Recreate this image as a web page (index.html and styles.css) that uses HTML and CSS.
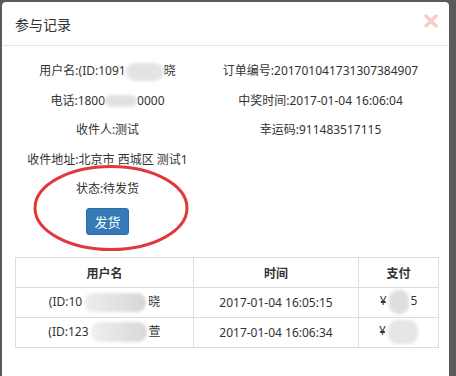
FILE: index.html
```html
<!DOCTYPE html>
<html lang="zh-CN">
  <head>
    <meta charset="UTF-8" />
    <title>参与记录</title>
    <link rel="stylesheet" href="styles.css">
  </head>
  <body>
    <div class="modal">
      <div class="modal-header">
        <h4 class="modal-title">参与记录</h4>
        <svg class="close" width="14" height="14" viewBox="0 0 14 14">
          <path d="M2 2 L12 12 M12 2 L2 12" />
        </svg>
      </div>

      <div class="modal-body">
        <div class="info">
          <div>用户名:(ID:1091<span class="blur b-name"></span>晓</div>
          <div>订单编号:201701041731307384907</div>
          <div>电话:1800<span class="blur b-phone"></span>0000</div>
          <div>中奖时间:2017-01-04 16:06:04</div>
          <div>收件人:测试</div>
          <div>幸运码:911483517115</div>
          <div>收件地址:北京市 西城区 测试1</div>
          <div></div>
          <div>状态:待发货</div>
          <div></div>
        </div>
        <div class="actions">
          <button class="btn">发货</button>
        </div>

        <table class="records">
          <thead>
            <tr>
              <th class="c-user">用户名</th>
              <th class="c-time">时间</th>
              <th>支付</th>
            </tr>
          </thead>
          <tbody>
            <tr>
              <td>(ID:10<span class="blur b-user"></span>晓</td>
              <td>2017-01-04 16:05:15</td>
              <td>¥<span class="blur b-pay"></span>5</td>
            </tr>
            <tr>
              <td>(ID:123<span class="blur b-user2"></span>萱</td>
              <td>2017-01-04 16:06:34</td>
              <td>¥<span class="blur b-pay2"></span></td>
            </tr>
          </tbody>
        </table>
      </div>

      <svg class="mark" width="164" height="92" viewBox="0 0 164 92">
        <ellipse cx="81" cy="45" rx="76" ry="41.5" />
      </svg>
    </div>
  </body>
</html>
```

FILE: styles.css
```css
body {
  margin: 0;
  background: #5b5b5b;
  font-family: "Noto Sans", "Noto Sans CJK SC", sans-serif;
  font-size: 12px;
  color: #333;
}
.modal {
  position: relative;
  margin: 2px 7px 0 2px;
  height: 374px;
  background: #fff;
  border-radius: 4px 4px 0 0;
}
.modal-header {
  height: 43px;
  padding: 0 11px 0 13px;
  display: flex;
  align-items: center;
  justify-content: space-between;
  border-bottom: 1px solid #e5e5e5;
}
.modal-title {
  margin: 0;
  font-size: 14px;
  font-weight: normal;
  color: #333;
  font-family: "Noto Sans CJK SC", sans-serif;
}
.close {
  margin-top: -6px;
}
.close path {
  stroke: #f8caca;
  stroke-width: 3.4;
  stroke-linecap: round;
}
.modal-body {
  padding: 10px 10px 0 13px;
}
.info {
  display: grid;
  grid-template-columns: 213px 213px;
  margin-left: -14px;
  line-height: 29.5px;
  text-align: center;
}
.actions {
  width: 213px;
  margin: 4px 0 0 -14px;
  text-align: center;
}
.btn {
  height: 27px;
  width: 43px;
  padding: 0;
  border: 1px solid #2e6da4;
  border-radius: 3px;
  background: #337ab7;
  color: #fff;
  font-family: "Noto Sans CJK SC", sans-serif;
  font-size: 13px;
}
.blur {
  display: inline-block;
  vertical-align: middle;
  background: #dedede;
  border-radius: 9px;
  filter: blur(1.5px);
}
.b-name {
  width: 38px;
  height: 18px;
  background: #e4e4e4;
}
.b-phone {
  width: 32px;
  height: 12px;
  background: #e2e2e2;
}
.b-user {
  width: 62px;
  height: 19px;
  margin: 0 2px;
  background: linear-gradient(90deg, #eeeeee, #d6d6d6);
}
.b-user2 {
  width: 56px;
  height: 20px;
  margin: 0 2px;
  background: linear-gradient(90deg, #efefef, #d8d8d8);
}
.b-pay {
  width: 20px;
  height: 24px;
  margin: 0 2px;
}
.b-pay2 {
  width: 30px;
  height: 24px;
  margin-left: 2px;
  background: #e6e6e6;
}
.records {
  width: 424px;
  margin-top: 22px;
  border-collapse: collapse;
  table-layout: fixed;
  text-align: center;
}
.records th,
.records td {
  height: 29px;
  padding: 0;
  border: 1px solid #ddd;
}
.records th {
  font-weight: bold;
  font-family: "Noto Sans CJK SC", sans-serif;
}
.c-user {
  width: 177px;
}
.c-time {
  width: 164px;
}
.mark {
  position: absolute;
  left: 28px;
  top: 161px;
}
.mark ellipse {
  fill: none;
  stroke: #e2383a;
  stroke-width: 3;
}
```
